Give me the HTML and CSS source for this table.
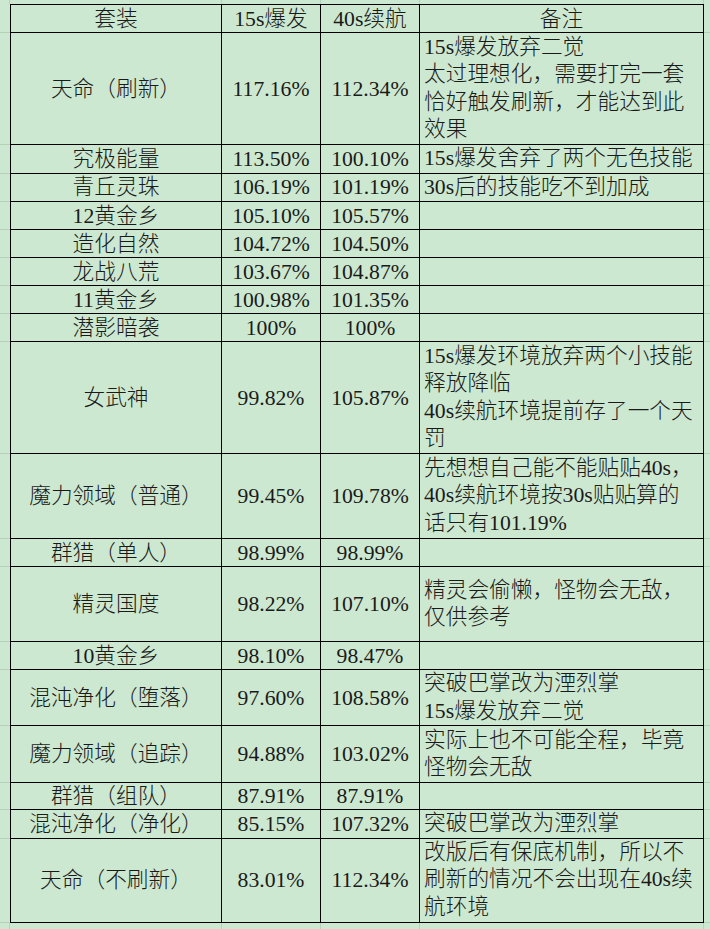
FILE: index.html
```html
<!DOCTYPE html>
<html lang="zh-CN">
<head>
<meta charset="utf-8">
<title>套装对比</title>
<link rel="stylesheet" href="styles.css">
</head>
<body>
<table class="sheet">
  <colgroup>
    <col class="w-gap-l"><col class="w-name"><col class="w-num"><col class="w-num"><col class="w-note"><col class="w-gap-r">
  </colgroup>
  <tr class="h-top">
    <td class="g gv"></td><td class="g gv"></td><td class="g gv"></td><td class="g gv"></td><td class="g gv"></td><td class="g"></td>
  </tr>
  <tr class="h-head">
    <td class="g gh"></td><td class="c first top">套装</td><td class="c top">15s爆发</td><td class="c top">40s续航</td><td class="c top">备注</td><td class="g gh"></td>
  </tr>
  <tr class="h112">
    <td class="g gh"></td><td class="c first">天命（刷新）</td><td class="c">117.16%</td><td class="c">112.34%</td>
    <td class="c note">15s爆发放弃二觉<br>太过理想化，需要打完一套<br>恰好触发刷新，才能达到此<br>效果</td><td class="g gh"></td>
  </tr>
  <tr class="h28">
    <td class="g gh"></td><td class="c first">究极能量</td><td class="c">113.50%</td><td class="c">100.10%</td><td class="c note">15s爆发舍弃了两个无色技能</td><td class="g gh"></td>
  </tr>
  <tr class="h28">
    <td class="g gh"></td><td class="c first">青丘灵珠</td><td class="c">106.19%</td><td class="c">101.19%</td><td class="c note">30s后的技能吃不到加成</td><td class="g gh"></td>
  </tr>
  <tr class="h28">
    <td class="g gh"></td><td class="c first">12黄金乡</td><td class="c">105.10%</td><td class="c">105.57%</td><td class="c note"></td><td class="g gh"></td>
  </tr>
  <tr class="h28">
    <td class="g gh"></td><td class="c first">造化自然</td><td class="c">104.72%</td><td class="c">104.50%</td><td class="c note"></td><td class="g gh"></td>
  </tr>
  <tr class="h28">
    <td class="g gh"></td><td class="c first">龙战八荒</td><td class="c">103.67%</td><td class="c">104.87%</td><td class="c note"></td><td class="g gh"></td>
  </tr>
  <tr class="h28">
    <td class="g gh"></td><td class="c first">11黄金乡</td><td class="c">100.98%</td><td class="c">101.35%</td><td class="c note"></td><td class="g gh"></td>
  </tr>
  <tr class="h28">
    <td class="g gh"></td><td class="c first">潜影暗袭</td><td class="c">100%</td><td class="c">100%</td><td class="c note"></td><td class="g gh"></td>
  </tr>
  <tr class="h112">
    <td class="g gh"></td><td class="c first">女武神</td><td class="c">99.82%</td><td class="c">105.87%</td>
    <td class="c note">15s爆发环境放弃两个小技能<br>释放降临<br>40s续航环境提前存了一个天<br>罚</td><td class="g gh"></td>
  </tr>
  <tr class="h85">
    <td class="g gh"></td><td class="c first">魔力领域（普通）</td><td class="c">99.45%</td><td class="c">109.78%</td>
    <td class="c note">先想想自己能不能贴贴40s，<br>40s续航环境按30s贴贴算的<br>话只有101.19%</td><td class="g gh"></td>
  </tr>
  <tr class="h28">
    <td class="g gh"></td><td class="c first">群猎（单人）</td><td class="c">98.99%</td><td class="c">98.99%</td><td class="c note"></td><td class="g gh"></td>
  </tr>
  <tr class="h75">
    <td class="g gh"></td><td class="c first">精灵国度</td><td class="c">98.22%</td><td class="c">107.10%</td>
    <td class="c note">精灵会偷懒，怪物会无敌，<br>仅供参考</td><td class="g gh"></td>
  </tr>
  <tr class="h28">
    <td class="g gh"></td><td class="c first">10黄金乡</td><td class="c">98.10%</td><td class="c">98.47%</td><td class="c note"></td><td class="g gh"></td>
  </tr>
  <tr class="h56">
    <td class="g gh"></td><td class="c first">混沌净化（堕落）</td><td class="c">97.60%</td><td class="c">108.58%</td>
    <td class="c note">突破巴掌改为湮烈掌<br>15s爆发放弃二觉</td><td class="g gh"></td>
  </tr>
  <tr class="h57">
    <td class="g gh"></td><td class="c first">魔力领域（追踪）</td><td class="c">94.88%</td><td class="c">103.02%</td>
    <td class="c note">实际上也不可能全程，毕竟<br>怪物会无敌</td><td class="g gh"></td>
  </tr>
  <tr class="h27">
    <td class="g gh"></td><td class="c first">群猎（组队）</td><td class="c">87.91%</td><td class="c">87.91%</td><td class="c note"></td><td class="g gh"></td>
  </tr>
  <tr class="h28">
    <td class="g gh"></td><td class="c first">混沌净化（净化）</td><td class="c">85.15%</td><td class="c">107.32%</td><td class="c note">突破巴掌改为湮烈掌</td><td class="g gh"></td>
  </tr>
  <tr class="h84">
    <td class="g gh"></td><td class="c first">天命（不刷新）</td><td class="c">83.01%</td><td class="c">112.34%</td>
    <td class="c note">改版后有保底机制，所以不<br>刷新的情况不会出现在40s续<br>航环境</td><td class="g gh"></td>
  </tr>
  <tr class="h-bottom">
    <td class="g gv"></td><td class="g gv"></td><td class="g gv"></td><td class="g gv"></td><td class="g gv"></td><td class="g"></td>
  </tr>
</table>
</body>
</html>
```

FILE: styles.css
```css
html, body {
  margin: 0;
  padding: 0;
  background: #cde8d0;
}

body {
  width: 710px;
  height: 929px;
  overflow: hidden;
  font-family: "Liberation Serif", "Noto Sans CJK SC", serif;
  font-size: 21.7px;
  font-weight: 300;
  color: #1a1a1a;
}

.sheet {
  border-collapse: separate;
  border-spacing: 0;
  table-layout: fixed;
  width: 710px;
}

.w-gap-l { width: 10px; }
.w-name { width: 212px; }
.w-num { width: 99px; }
.w-note { width: 284px; }
.w-gap-r { width: 6px; }

td {
  padding: 0;
  box-sizing: border-box;
  white-space: nowrap;
  overflow: hidden;
  vertical-align: middle;
  line-height: 26px;
}

.c {
  text-align: center;
  border-right: 1px solid #000;
  border-bottom: 1px solid #000;
}

.c.first { border-left: 1px solid #000; }
.c.top { border-top: 1px solid #000; }

.c.note {
  text-align: left;
  padding-left: 4px;
  line-height: 27.5px;
}

.g { border: 0; }
.gh { border-bottom: 1px solid #b7d0ba; }
.gv { border-right: 1px solid #b7d0ba; }

.h-top { height: 4px; }
.h-head { height: 29px; }
.h27 { height: 27px; }
.h28 { height: 28px; }
.h56 { height: 56px; }
.h57 { height: 57px; }
.h75 { height: 75px; }
.h84 { height: 84px; }
.h85 { height: 85px; }
.h112 { height: 112px; }
.h-bottom { height: 8px; }
```
